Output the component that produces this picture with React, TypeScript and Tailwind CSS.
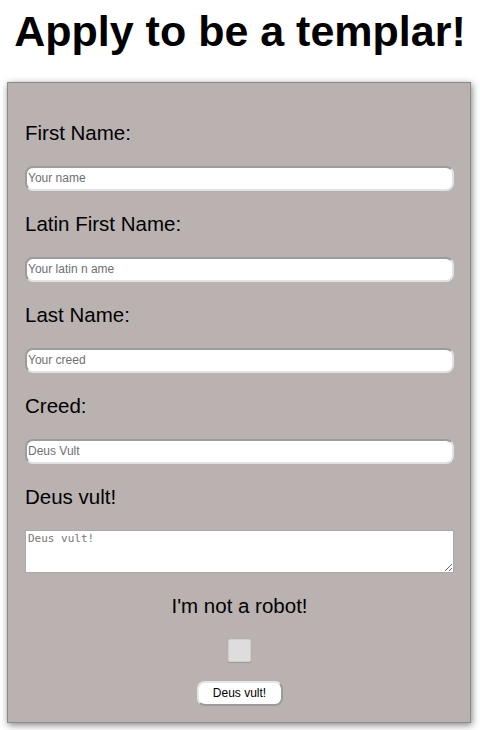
import React from "react";

const inputCls =
  "block w-[429px] h-[25px] bg-white rounded-[8px] border-2 border-t-[#9c9c9c] border-l-[#9c9c9c] border-b-[#e2e2e2] border-r-[#e2e2e2] px-[1px] text-[12px] text-black placeholder:text-[#6f6f6f] outline-none";

function Field({ label, placeholder }: { label: string; placeholder: string }) {
  return (
    <div className="flex flex-col">
      <label className="text-[20.5px] leading-[23px] text-black">{label}</label>
      <input type="text" placeholder={placeholder} className={`${inputCls} mt-[21.5px] mb-[21.5px]`} />
    </div>
  );
}

export default function App() {
  return (
    <div className="w-[480px] h-[730px] bg-white overflow-hidden [font-family:'Liberation_Sans',Arial,sans-serif]">
      <h1 className="text-center font-bold text-[43px] leading-[50px] pt-[6px] text-black">
        Apply to be a templar!
      </h1>
      <form className="mt-[26px] ml-[7px] w-[464px] h-[641px] bg-[#bab1b1] border border-[#8a8a8a] shadow-[1px_2px_7px_rgba(0,0,0,0.5)] pl-[17px] pt-[38px]">
        <Field label="First Name:" placeholder="Your name" />
        <Field label="Latin First Name:" placeholder="Your latin n ame" />
        <Field label="Last Name:" placeholder="Your creed" />
        <Field label="Creed:" placeholder="Deus Vult" />
        <label className="block text-[20.5px] leading-[23px] text-black">Deus vult!</label>
        <textarea
          placeholder="Deus vult!"
          className="block mt-[21.5px] w-[429px] h-[43px] bg-white border border-[#a9a9a9] px-[2px] py-[1px] text-[11px] leading-[13px] [font-family:'DejaVu_Sans_Mono',monospace] placeholder:text-[#777] outline-none"
        />
        <div className="w-[429px] flex flex-col items-center">
          <p className="mt-[21px] text-[20.5px] leading-[23px] text-black">I'm not a robot!</p>
          <input
            type="checkbox"
            className="appearance-none mt-[22px] w-[23px] h-[23px] bg-[#dddddd] border border-[#cfcfcf] rounded-[2px] shadow-[0_1px_1px_rgba(0,0,0,0.15)]"
          />
          <button
            type="button"
            className="mt-[19px] w-[86px] h-[25px] bg-white rounded-[8px] border-2 border-t-[#e6e6e6] border-l-[#e6e6e6] border-b-[#9a9a9a] border-r-[#9a9a9a] text-[12px] text-black"
          >
            Deus vult!
          </button>
        </div>
      </form>
    </div>
  );
}
